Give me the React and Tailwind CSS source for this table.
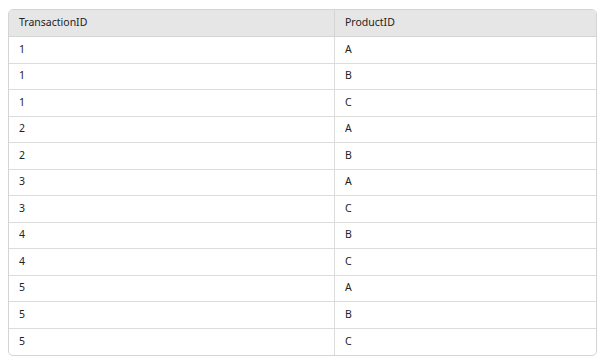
import React from "react";

const rows = [
  ["1", "A"], ["1", "B"], ["1", "C"], ["2", "A"], ["2", "B"], ["3", "A"],
  ["3", "C"], ["4", "B"], ["4", "C"], ["5", "A"], ["5", "B"], ["5", "C"],
];

export default function App() {
  return (
    <div className="w-[603px] h-[361px] bg-white pt-[9px] pl-[8px]" style={{ fontFamily: '"Noto Sans", "Open Sans", sans-serif' }}>
      <div className="w-[589px] border border-[#d4d4d4] rounded-[5px] overflow-hidden text-[10.5px] text-[#222]">
        <div className="flex bg-[#e6e6e6] h-[27px] items-center border-b border-[#d4d4d4]">
          <div className="w-[326px] h-full flex items-center pl-[10px] border-r border-[#d4d4d4]">TransactionID</div>
          <div className="flex-1 h-full flex items-center pl-[10px]">ProductID</div>
        </div>
        {rows.map((r, i) => (
          <div key={i} className={`flex h-[26.5px] items-center ${i < rows.length - 1 ? "border-b border-[#dcdcdc]" : ""}`}>
            <div className="w-[326px] h-full flex items-center pl-[10px] border-r border-[#dcdcdc]">{r[0]}</div>
            <div className="flex-1 h-full flex items-center pl-[10px]">{r[1]}</div>
          </div>
        ))}
      </div>
    </div>
  );
}
